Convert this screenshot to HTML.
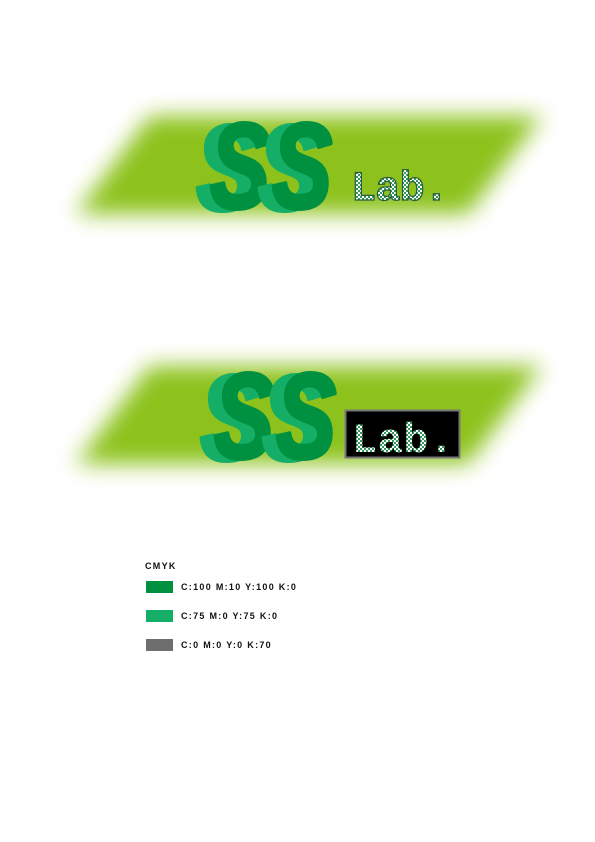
<!DOCTYPE html>
<html><head><style>
body{margin:0;background:#fff;width:595px;height:842px;overflow:hidden;font-family:"Liberation Sans",sans-serif}
.t{position:absolute;font-weight:bold;font-size:9px;letter-spacing:1.3px;color:#111}
.sw{position:absolute;left:146px;width:27px;height:12px}
</style></head><body>
<svg width="595" height="842" style="position:absolute;left:0;top:0">
<defs>
<filter id="b" x="-20%" y="-60%" width="140%" height="220%"><feGaussianBlur stdDeviation="11"/></filter>
<pattern id="ck" width="4" height="4" patternUnits="userSpaceOnUse"><rect width="4" height="4" fill="#fff"/><rect width="2" height="2" fill="#2f9a5c"/><rect x="2" y="2" width="2" height="2" fill="#2f9a5c"/></pattern>
</defs>
<polygon points="76,214 150,116 542,116 468,214" fill="#8dc21f" filter="url(#b)"/>
<polygon points="76,464 150,366 542,366 468,464" fill="#8dc21f" filter="url(#b)"/>
<g font-family="Liberation Sans" font-weight="bold" font-style="italic" font-size="122" stroke-width="4" stroke-linejoin="round">
<text transform="translate(196,210) scale(0.74,1)" fill="#14ae67" stroke="#14ae67">S</text>
<text transform="translate(210,208) scale(0.74,1)" fill="#009140" stroke="#009140">S</text>
<text transform="translate(258,210) scale(0.74,1)" fill="#14ae67" stroke="#14ae67">S</text>
<text transform="translate(272,208) scale(0.74,1)" fill="#009140" stroke="#009140">S</text>
<text transform="translate(200,460) scale(0.74,1)" fill="#14ae67" stroke="#14ae67">S</text>
<text transform="translate(214,458) scale(0.74,1)" fill="#009140" stroke="#009140">S</text>
<text transform="translate(262,460) scale(0.74,1)" fill="#14ae67" stroke="#14ae67">S</text>
<text transform="translate(276,458) scale(0.74,1)" fill="#009140" stroke="#009140">S</text>
</g>
<text x="351" y="200" font-family="Liberation Mono" font-weight="bold" font-size="42" fill="url(#ck)" stroke="#2d5a3c" stroke-width="1.2" textLength="98">Lab.</text>
<rect x="345.5" y="410.5" width="114" height="47" fill="#000" stroke="#777" stroke-width="2"/>
<text x="352" y="452" font-family="Liberation Mono" font-weight="bold" font-size="42" fill="url(#ck)" textLength="102">Lab.</text>
</svg>
<div class="t" style="left:145px;top:561px">CMYK</div>
<div class="sw" style="top:581px;background:#009140"></div><div class="t" style="left:181px;top:582px">C:100 M:10 Y:100 K:0</div>
<div class="sw" style="top:610px;background:#14ae67"></div><div class="t" style="left:181px;top:611px">C:75 M:0 Y:75 K:0</div>
<div class="sw" style="top:639px;background:#6e6e6e"></div><div class="t" style="left:181px;top:640px">C:0 M:0 Y:0 K:70</div>
</body></html>
